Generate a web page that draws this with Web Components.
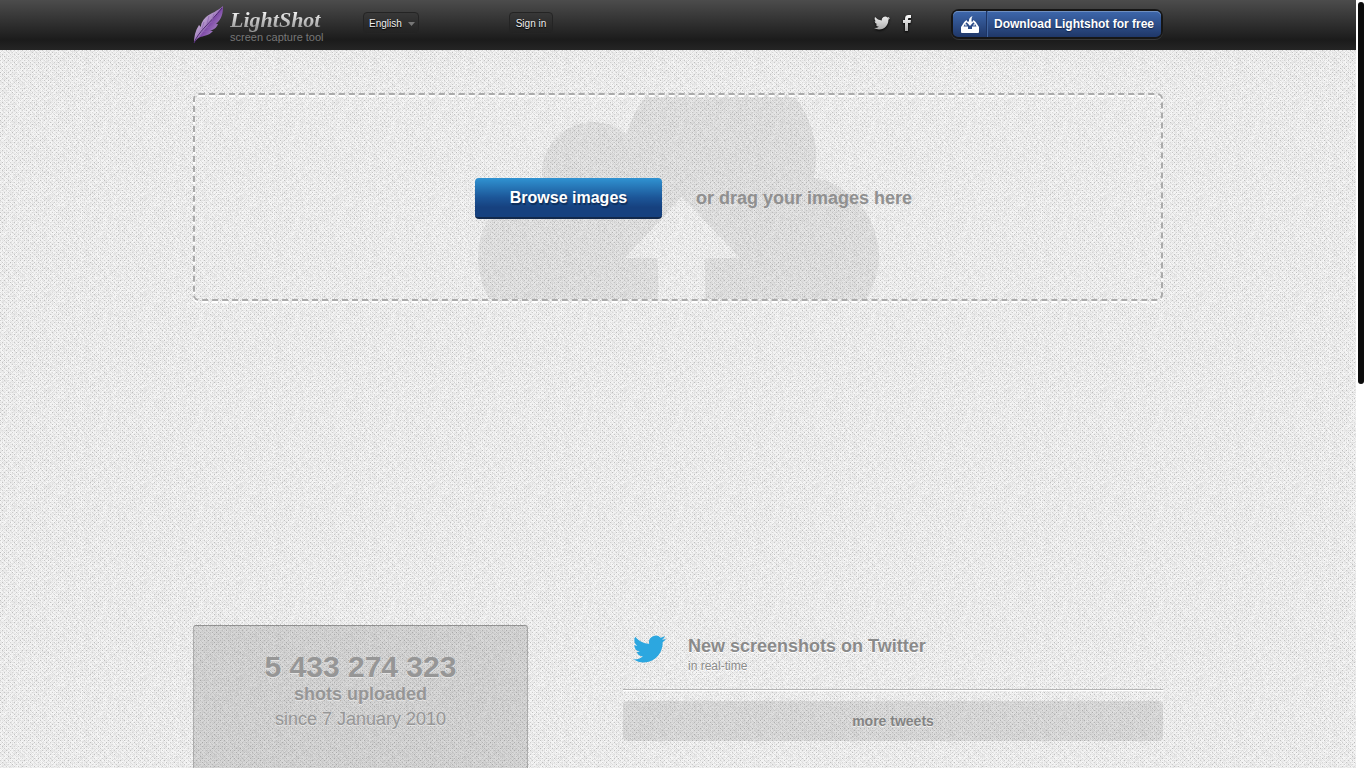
<!DOCTYPE html>
<html lang="en">
<head>
<meta charset="utf-8">
<meta name="viewport" content="width=device-width, initial-scale=1">
<title>Lightshot</title>
<style>
	html, body {
		height: 100%;
		margin: 0;
	}
	body {
		font-family: "Liberation Sans", Arial, sans-serif;
		color: #8a8a8a;
		background: #fff;
	}
</style>
</head>
<body>
<ls-page>
	<ls-header slot="header"></ls-header>
	<ls-dropzone>or drag your images here</ls-dropzone>
	<ls-stats slot="aside" total="5 433 274 323" since="since 7 January 2010">shots uploaded</ls-stats>
	<ls-tweets slot="aside">
		New screenshots on Twitter
		<span slot="note">in real-time</span>
	</ls-tweets>
</ls-page>

<script>
const TWITTER = "M23.953 4.57a10 10 0 01-2.825.775 4.958 4.958 0 002.163-2.723c-.951.555-2.005.959-3.127 1.184a4.92 4.92 0 00-8.384 4.482C7.69 8.095 4.067 6.13 1.64 3.162a4.822 4.822 0 00-.666 2.475c0 1.71.87 3.213 2.188 4.096a4.904 4.904 0 01-2.228-.616v.06a4.923 4.923 0 003.946 4.827 4.996 4.996 0 01-2.212.085 4.936 4.936 0 004.604 3.417 9.867 9.867 0 01-6.102 2.105c-.39 0-.779-.023-1.17-.067a13.995 13.995 0 007.557 2.209c9.053 0 13.998-7.496 13.998-13.985 0-.21 0-.42-.015-.63A9.935 9.935 0 0024 4.59z";

/* Woven paper tile, as an SVG background */
function paper() {
	const size = 96;
	let seed = 7;
	const rnd = () => (seed = (seed * 16807) % 2147483647) / 2147483647;
	let rects = "";
	for (let y = 0; y < size; y++) {
		for (let x = 0; x < size; x++) {
			let v = 222 + rnd() * 22;
			if (y % 2 == 0 && (x + y) % 4 == 0) v = 188 + rnd() * 32;
			else if ((x + y) % 2 == 1) v += 6;
			v = Math.round(v);
			rects += `<path fill="rgb(${v},${v},${v})" d="M${x} ${y}h1v1h-1z"/>`;
		}
	}
	const svg = `<svg xmlns="http://www.w3.org/2000/svg" width="${size}" height="${size}" shape-rendering="crispEdges">${rects}</svg>`;
	return `url("data:image/svg+xml,${encodeURIComponent(svg)}")`;
}

class LsPage extends HTMLElement {
	constructor() {
		super();
		this.attachShadow({ mode: "open" }).innerHTML = `
			<style>
				:host {
					display: flex;
					height: 100vh;
				}
				.view {
					flex: 1;
					min-width: 0;
					overflow: hidden;
					background: #e6e6e6 var(--paper);
				}
				main {
					max-width: 970px;
					margin: 0 auto;
					padding-top: 43px;
				}
				.columns {
					display: flex;
					justify-content: space-between;
					align-items: flex-start;
					margin-top: 324px;
				}
				.scroll {
					width: 6px;
					padding: 2px;
					background: #fff;
				}
				.thumb {
					height: 50%;
					border-radius: 3px;
					background: #0b0b0b;
				}
			</style>
			<div class="view">
				<slot name="header"></slot>
				<main>
					<slot></slot>
					<div class="columns"><slot name="aside"></slot></div>
				</main>
			</div>
			<div class="scroll"><div class="thumb"></div></div>
		`;
		this.style.setProperty("--paper", paper());
	}
}
customElements.define("ls-page", LsPage);

class LsLogo extends HTMLElement {
	constructor() {
		super();
		this.attachShadow({ mode: "open" }).innerHTML = `
			<style>
				:host { display: block; }
				a {
					display: flex;
					gap: 6px;
					color: #777;
					text-decoration: none;
				}
				.text { padding-top: 2px; }
				.name {
					font: italic bold 22px/25px "Liberation Serif", serif;
					background: linear-gradient(#f4f4f4 20%, #999 85%);
					-webkit-background-clip: text;
					background-clip: text;
					color: transparent;
				}
				.tag {
					font-size: 11px;
					line-height: 11px;
					white-space: nowrap;
				}
			</style>
			<a href="#">
				<svg width="31" height="39" viewBox="0 0 31 39" aria-hidden="true">
					<defs>
						<linearGradient id="g" x1="0" y1="0" x2="1" y2="1">
							<stop offset=".2" stop-color="#d3c3df"/>
							<stop offset=".48" stop-color="#a582c0"/>
							<stop offset=".52" stop-color="#7f4ba8"/>
							<stop offset=".8" stop-color="#b596cc"/>
						</linearGradient>
					</defs>
					<path fill="url(#g)" d="M30 1C25 6 18 8 13 12 9 16 8 19 8 22L6 20C2 26 1 32 1 38 4 33 7 32 11 31 16 30 18 28 20 26L17 26C22 24 24 22 25 19L23 19C29 14 30 8 30 1z"/>
					<path fill="none" stroke="#4c2870" d="M1 38C5 27 17 18 29 3"/>
					<path fill="none" stroke="#8d61b0" stroke-width=".7" d="M9 24l2-7m3 2l2-8m3 4l2-6M8 27l8-1m-3-3l8-2m-4-3l8-3"/>
				</svg>
				<div class="text">
					<div class="name">LightShot</div>
					<div class="tag">screen capture tool</div>
				</div>
			</a>
		`;
	}
}
customElements.define("ls-logo", LsLogo);

class LsHeader extends HTMLElement {
	constructor() {
		super();
		this.attachShadow({ mode: "open" }).innerHTML = `
			<style>
				:host {
					display: block;
					height: 50px;
					background: linear-gradient(#4c4c4c, #1b1b1b 80%, #252525);
				}
				.bar {
					display: flex;
					align-items: flex-start;
					max-width: 970px;
					margin: 0 auto;
				}
				ls-logo {
					width: 170px;
					padding-top: 5px;
					box-sizing: border-box;
				}
				.lang {
					position: relative;
					width: 56px;
					margin: 12px 90px 0 0;
				}
				.lang svg {
					position: absolute;
					right: 4px;
					top: 10px;
					pointer-events: none;
				}
				select, .sign {
					box-sizing: border-box;
					height: 22px;
					padding: 1px 5px 0;
					border: 1px solid #242424;
					border-radius: 4px;
					background: linear-gradient(#383838, #222);
					color: #eee;
					font: 10px/20px "Liberation Sans", Arial, sans-serif;
					text-shadow: 0 1px 1px #000;
				}
				select {
					appearance: none;
					width: 100%;
				}
				.sign {
					min-width: 44px;
					margin-top: 12px;
				}
				.social {
					display: flex;
					align-items: center;
					gap: 13px;
					margin: 14px 40px 0 auto;
				}
				.social a { display: flex; }
				.social svg { filter: drop-shadow(0 1px 1px #000); }
				.download {
					box-sizing: border-box;
					width: 212px;
					padding: 2px;
					margin-top: 9px;
					border-radius: 8px;
					background: #161616;
					box-shadow: 0 1px 0 #383838;
					color: #fff;
					font-size: 12px;
					font-weight: bold;
					line-height: 26px;
					text-decoration: none;
					text-shadow: 0 1px 1px #122347;
					white-space: nowrap;
				}
				.face {
					display: flex;
					height: 26px;
					border-radius: 5px;
					background: linear-gradient(#3e68ad, #1f3768);
					box-shadow: inset 0 1px 0 #6f8fc0;
				}
				.icon {
					display: flex;
					align-items: center;
					justify-content: center;
					width: 33px;
					border-right: 1px solid #1d3464;
				}
				.face span {
					flex: 1;
					padding-left: 6px;
					border-left: 1px solid #41659f;
				}
			</style>
			<div class="bar">
				<ls-logo></ls-logo>
				<div class="lang">
					<select aria-label="Language"><option>English</option></select>
					<svg width="7" height="4" aria-hidden="true"><path d="M0 0h7L3.5 4z" fill="#777"/></svg>
				</div>
				<button class="sign" type="button">Sign in</button>
				<div class="social">
					<a href="#" aria-label="Twitter">
						<svg width="16" height="14" viewBox="0 2 24 20">
							<defs><linearGradient id="t" x2="0" y2="1"><stop stop-color="#eee"/><stop offset="1" stop-color="#aaa"/></linearGradient></defs>
							<path fill="url(#t)" d="${TWITTER}"/>
						</svg>
					</a>
					<a href="#" aria-label="Facebook">
						<svg width="8" height="17" viewBox="0 0 8 17">
							<defs><linearGradient id="f" x2="0" y2="1"><stop stop-color="#fff"/><stop offset="1" stop-color="#aaa"/></linearGradient></defs>
							<path fill="url(#f)" d="M2 17V9H0V6h2V4.500C2 2 3.500 1 5.500 1H8v3H6.500C5.500 4 5 4.200 5 5v1h3l-.5 3H5v8z"/>
						</svg>
					</a>
				</div>
				<a class="download" href="#">
					<div class="face">
						<div class="icon">
							<svg width="18" height="17" viewBox="0 0 18 17" aria-hidden="true">
								<path fill="#fff" d="M0 11L2 8Q4 4 7 4h4q3 0 5 4l2 3v5q0 1-1 1H1q-1 0-1-1z"/>
								<path fill="#2c4c88" d="M2.500 10.500Q4 7 6 6V3h6v3q2 1 3.500 4.500H11V13H7v-2.500z"/>
								<path fill="#fff" d="M8 5.500Q7.500 1.500 11.500 0 10 2 10.500 5.500H13L9 10 5 5.500zM4.500 7l1.500 2.500H4zM13.500 7L12 9.500h2z"/>
							</svg>
						</div>
						<span>Download Lightshot for free</span>
					</div>
				</a>
			</div>
		`;
	}
}
customElements.define("ls-header", LsHeader);

class LsDropzone extends HTMLElement {
	constructor() {
		super();
		this.attachShadow({ mode: "open" }).innerHTML = `
			<style>
				:host {
					display: block;
					position: relative;
					z-index: 0;
				}
				.zone {
					position: relative;
					display: grid;
					grid-template-columns: 1fr 1fr;
					gap: 34px;
					align-items: center;
					box-sizing: border-box;
					min-height: 208px;
					padding: 2px 0 0 2px;
					border: 2px dashed #aaa;
					border-radius: 6px;
				}
				/* white highlight under the dashes */
				.zone::before {
					content: "";
					position: absolute;
					inset: 0 -2px -4px;
					z-index: -1;
					border: 2px dashed #fff;
					border-radius: 6px;
				}
				.cloud {
					position: absolute;
					inset: 0;
					z-index: -2;
					display: flex;
					justify-content: center;
					overflow: hidden;
				}
				.cloud svg { overflow: visible; }
				button {
					justify-self: end;
					min-width: 187px;
					height: 41px;
					padding: 1px 20px 0;
					border: 0;
					border-bottom: 2px solid #12294c;
					border-radius: 4px;
					background: linear-gradient(#3093d2, #1c5698 50%, #16417f 75%);
					color: #fff;
					font: bold 16px/38px "Liberation Sans", Arial, sans-serif;
					text-shadow: 1px 2px 1px #0d2c58;
				}
				p {
					margin: 0;
					color: #909090;
					font-size: 18px;
					font-weight: bold;
				}
			</style>
			<div class="zone">
				<div class="cloud">
					<svg width="400" height="204" viewBox="478 95 400 204" aria-hidden="true">
						<defs>
							<mask id="arrow" maskUnits="userSpaceOnUse" x="478" y="95" width="402" height="206">
								<path fill="#fff" d="M478 95h402v206H478z"/>
								<path fill="#000" d="M682 197l58 61h-35v43h-47v-43h-33z"/>
							</mask>
						</defs>
						<g fill="#000" opacity=".055" mask="url(#arrow)">
							<circle cx="593" cy="173" r="51"/>
							<circle cx="720" cy="157" r="96"/>
							<circle cx="558" cy="258" r="80"/>
							<circle cx="799" cy="256" r="80"/>
							<path d="M558 178h241v123H558z"/>
						</g>
					</svg>
				</div>
				<button type="button">Browse images</button>
				<p><slot></slot></p>
			</div>
		`;
	}
}
customElements.define("ls-dropzone", LsDropzone);

class LsStats extends HTMLElement {
	constructor() {
		super();
		this.attachShadow({ mode: "open" }).innerHTML = `
			<style>
				:host {
					display: block;
					box-sizing: border-box;
					width: 335px;
					min-height: 220px;
					padding-top: 25px;
					border: 1px solid rgba(0, 0, 0, .18);
					border-top-color: rgba(0, 0, 0, .3);
					border-radius: 3px;
					background: rgba(0, 0, 0, .115);
					color: #969696;
					font-size: 18px;
					line-height: 25px;
					text-align: center;
					text-shadow: 0 1px 0 #e4e4e4;
				}
				.total {
					font-size: 30px;
					line-height: 31px;
				}
				.total, .label { font-weight: bold; }
			</style>
			<div class="total">${this.getAttribute("total")}</div>
			<div class="label"><slot></slot></div>
			<div>${this.getAttribute("since")}</div>
		`;
	}
}
customElements.define("ls-stats", LsStats);

class LsTweets extends HTMLElement {
	constructor() {
		super();
		this.attachShadow({ mode: "open" }).innerHTML = `
			<style>
				:host {
					display: block;
					width: 540px;
					text-shadow: 0 1px 0 #fff;
				}
				header {
					display: flex;
					gap: 22px;
					padding: 10px 10px 13px;
					border-bottom: 1px solid #b4b4b4;
					box-shadow: 0 1px 0 #fff;
				}
				h2 {
					margin: 0;
					font-size: 18px;
					line-height: 22px;
				}
				.note {
					font-size: 12px;
					line-height: 19px;
				}
				button {
					width: 100%;
					height: 40px;
					margin-top: 11px;
					padding: 0 6px 1px;
					border: 0;
					border-radius: 4px;
					background: rgba(0, 0, 0, .09);
					color: #838383;
					font: bold 14px/38px "Liberation Sans", Arial, sans-serif;
					text-shadow: 0 1px 0 #eee;
				}
			</style>
			<header>
				<svg width="33" height="28" viewBox="0 2 24 20" aria-hidden="true"><path fill="#2ca7e0" d="${TWITTER}"/></svg>
				<div>
					<h2><slot></slot></h2>
					<div class="note"><slot name="note"></slot></div>
				</div>
			</header>
			<button type="button">more tweets</button>
		`;
	}
}
customElements.define("ls-tweets", LsTweets);
</script>
</body>
</html>
